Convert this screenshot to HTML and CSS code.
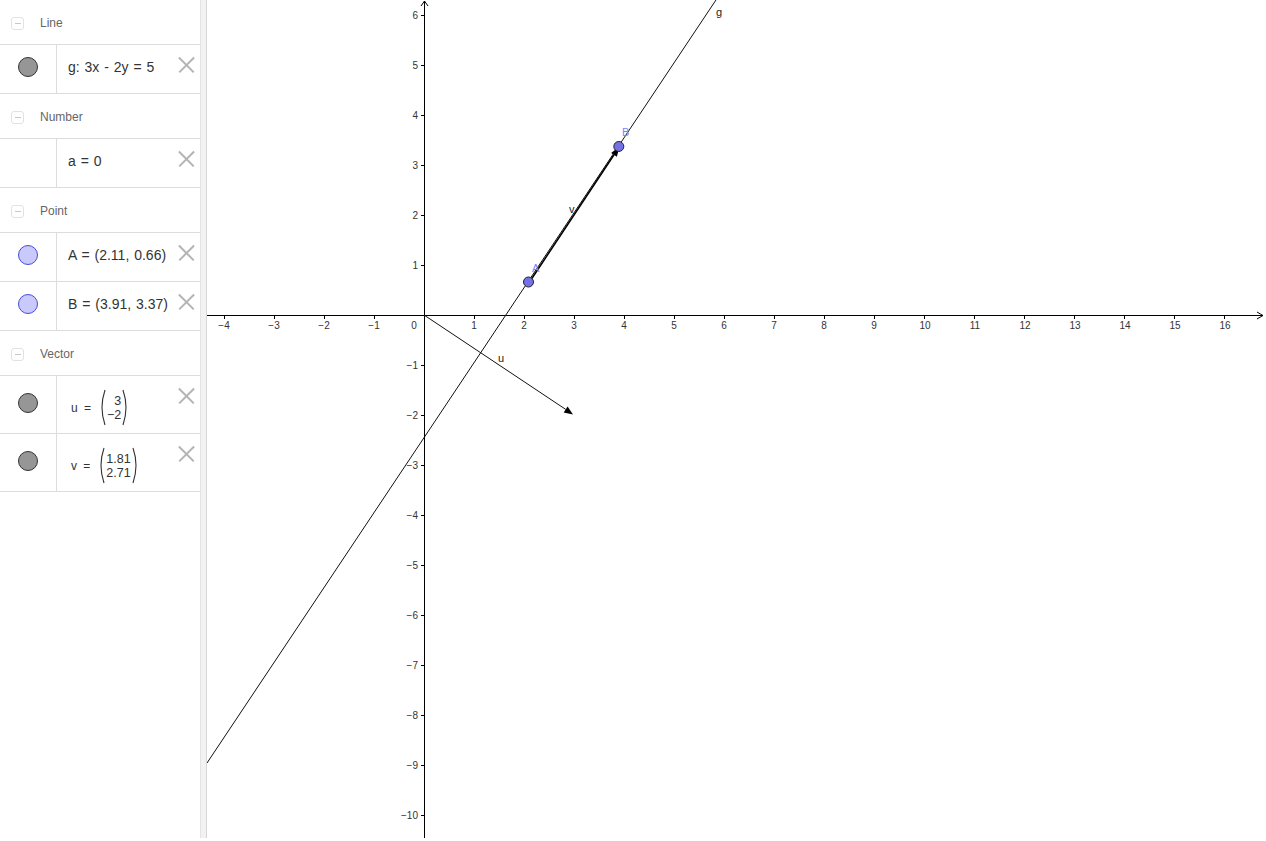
FILE: index.html
```html
<!DOCTYPE html>
<html>
<head>
<meta charset="utf-8">
<link rel="stylesheet" href="styles.css">
</head>
<body>
<div class="app">
  <div class="algebra">
    <div class="head"><span class="collapse"></span><span class="cat">Line</span></div>
    <div class="item">
      <div class="mark"><span class="dot gray"></span></div>
      <div class="expr">g: 3x - 2y = 5</div>
      <span class="close"></span>
    </div>
    <div class="head"><span class="collapse"></span><span class="cat">Number</span></div>
    <div class="item">
      <div class="mark"></div>
      <div class="expr">a = 0</div>
      <span class="close"></span>
    </div>
    <div class="head"><span class="collapse"></span><span class="cat">Point</span></div>
    <div class="item">
      <div class="mark"><span class="dot blue"></span></div>
      <div class="expr">A = (2.11, 0.66)</div>
      <span class="close"></span>
    </div>
    <div class="item">
      <div class="mark"><span class="dot blue"></span></div>
      <div class="expr">B = (3.91, 3.37)</div>
      <span class="close"></span>
    </div>
    <div class="head"><span class="collapse"></span><span class="cat">Vector</span></div>
    <div class="item tall">
      <div class="mark"><span class="dot gray"></span></div>
      <div class="expr vec">
        <span class="vname">u =</span>
        <span class="matrix">
          <svg class="paren" viewBox="0 0 7 37" width="7" height="37"><path d="M6 1 Q0 18.5 6 36" fill="none" stroke="#333" stroke-width="1.1"/></svg>
          <span class="nums"><span>3</span><span>−2</span></span>
          <svg class="paren" viewBox="0 0 7 37" width="7" height="37"><path d="M1 1 Q7 18.5 1 36" fill="none" stroke="#333" stroke-width="1.1"/></svg>
        </span>
      </div>
      <span class="close"></span>
    </div>
    <div class="item tall">
      <div class="mark"><span class="dot gray"></span></div>
      <div class="expr vec">
        <span class="vname">v =</span>
        <span class="matrix">
          <svg class="paren" viewBox="0 0 7 37" width="7" height="37"><path d="M6 1 Q0 18.5 6 36" fill="none" stroke="#333" stroke-width="1.1"/></svg>
          <span class="nums"><span>1.81</span><span>2.71</span></span>
          <svg class="paren" viewBox="0 0 7 37" width="7" height="37"><path d="M1 1 Q7 18.5 1 36" fill="none" stroke="#333" stroke-width="1.1"/></svg>
        </span>
      </div>
      <span class="close"></span>
    </div>
  </div>
  <div class="splitter"></div>
  <div class="graphics">
    <svg class="plot" width="1059" height="838" viewBox="207 0 1059 838">
      <g stroke="#000" stroke-width="1" fill="none" shape-rendering="crispEdges">
        <line x1="207" y1="315.5" x2="1263" y2="315.5"/>
        <line x1="424.5" y1="1" x2="424.5" y2="838"/>
      </g>
      <g stroke="#000" stroke-width="1" fill="none">
        <polyline points="1257,312 1263,315.5 1257,319"/>
        <polyline points="421,6 424.5,1 428,6"/>
      </g>
      <g stroke="#000" stroke-width="1" shape-rendering="crispEdges">
        <line x1="224.5" y1="315" x2="224.5" y2="319"/><line x1="274.5" y1="315" x2="274.5" y2="319"/>
        <line x1="324.5" y1="315" x2="324.5" y2="319"/><line x1="374.5" y1="315" x2="374.5" y2="319"/>
        <line x1="474.5" y1="315" x2="474.5" y2="319"/><line x1="524.5" y1="315" x2="524.5" y2="319"/>
        <line x1="574.5" y1="315" x2="574.5" y2="319"/><line x1="624.5" y1="315" x2="624.5" y2="319"/>
        <line x1="674.5" y1="315" x2="674.5" y2="319"/><line x1="724.5" y1="315" x2="724.5" y2="319"/>
        <line x1="774.5" y1="315" x2="774.5" y2="319"/><line x1="824.5" y1="315" x2="824.5" y2="319"/>
        <line x1="874.5" y1="315" x2="874.5" y2="319"/><line x1="924.5" y1="315" x2="924.5" y2="319"/>
        <line x1="974.5" y1="315" x2="974.5" y2="319"/><line x1="1024.5" y1="315" x2="1024.5" y2="319"/>
        <line x1="1074.5" y1="315" x2="1074.5" y2="319"/><line x1="1124.5" y1="315" x2="1124.5" y2="319"/>
        <line x1="1174.5" y1="315" x2="1174.5" y2="319"/><line x1="1224.5" y1="315" x2="1224.5" y2="319"/>
        <line x1="421" y1="15.5" x2="425" y2="15.5"/><line x1="421" y1="65.5" x2="425" y2="65.5"/>
        <line x1="421" y1="115.5" x2="425" y2="115.5"/><line x1="421" y1="165.5" x2="425" y2="165.5"/>
        <line x1="421" y1="215.5" x2="425" y2="215.5"/><line x1="421" y1="265.5" x2="425" y2="265.5"/>
        <line x1="421" y1="365.5" x2="425" y2="365.5"/><line x1="421" y1="415.5" x2="425" y2="415.5"/>
        <line x1="421" y1="465.5" x2="425" y2="465.5"/><line x1="421" y1="515.5" x2="425" y2="515.5"/>
        <line x1="421" y1="565.5" x2="425" y2="565.5"/><line x1="421" y1="615.5" x2="425" y2="615.5"/>
        <line x1="421" y1="665.5" x2="425" y2="665.5"/><line x1="421" y1="715.5" x2="425" y2="715.5"/>
        <line x1="421" y1="765.5" x2="425" y2="765.5"/><line x1="421" y1="815.5" x2="425" y2="815.5"/>
      </g>
      <g class="xlab" text-anchor="middle">
        <text x="224" y="329">−4</text><text x="274" y="329">−3</text><text x="324" y="329">−2</text><text x="374" y="329">−1</text>
        <text x="414" y="329">0</text>
        <text x="474" y="329">1</text><text x="524" y="329">2</text><text x="574" y="329">3</text><text x="624" y="329">4</text>
        <text x="674" y="329">5</text><text x="724" y="329">6</text><text x="774" y="329">7</text><text x="824" y="329">8</text>
        <text x="874" y="329">9</text><text x="925" y="329">10</text><text x="975" y="329">11</text><text x="1025" y="329">12</text>
        <text x="1075" y="329">13</text><text x="1125" y="329">14</text><text x="1175" y="329">15</text><text x="1225" y="329">16</text>
      </g>
      <g class="ylab" text-anchor="end">
        <text x="418" y="19">6</text><text x="418" y="69">5</text><text x="418" y="119">4</text>
        <text x="418" y="169">3</text><text x="418" y="219">2</text><text x="418" y="269">1</text>
        <text x="418" y="369">−1</text><text x="418" y="419">−2</text><text x="418" y="469">−3</text>
        <text x="418" y="519">−4</text><text x="418" y="569">−5</text><text x="418" y="619">−6</text>
        <text x="418" y="669">−7</text><text x="418" y="719">−8</text><text x="418" y="769">−9</text>
        <text x="418" y="819">−10</text>
      </g>
      <line x1="207" y1="763" x2="717.3" y2="-2" stroke="#111" stroke-width="1"/>
      <line x1="424" y1="315" x2="565.7" y2="409.4" stroke="#111" stroke-width="1"/>
      <polygon points="573,414.5 563.7,412.4 567.6,406.5" fill="#000"/>
      <line x1="529.5" y1="282" x2="614" y2="154.8" stroke="#000" stroke-width="1.6"/>
      <polygon points="619.5,146.5 616.9,156.7 611.1,152.9" fill="#000"/>
      <circle cx="528.5" cy="282" r="5" fill="#7272e6" stroke="#222" stroke-width="1"/>
      <circle cx="618.8" cy="146.5" r="5" fill="#7272e6" stroke="#222" stroke-width="1"/>
      <g class="plabel">
        <text x="532" y="272">A</text>
        <text x="622" y="136">B</text>
      </g>
      <g class="olabel">
        <text x="716" y="16">g</text>
        <text x="569" y="213">v</text>
        <text x="498" y="362">u</text>
      </g>
    </svg>
  </div>
</div>
</body>
</html>
```

FILE: styles.css
```css
html, body {
  margin: 0;
  padding: 0;
  background: #fff;
}

body {
  font-family: "Liberation Sans", Arial, sans-serif;
  color: #333;
}

.app {
  display: flex;
  width: 1266px;
  height: 838px;
  overflow: hidden;
}

.algebra {
  width: 200px;
  flex: 0 0 200px;
  display: flex;
  flex-direction: column;
  background: #fff;
}

.head {
  height: 45px;
  box-sizing: border-box;
  border-bottom: 1px solid #dcdcdc;
  display: flex;
  align-items: center;
  padding-left: 11px;
  padding-top: 2px;
}

.collapse {
  width: 13px;
  height: 13px;
  border: 1px solid #e2e2e2;
  border-radius: 3px;
  box-sizing: border-box;
  display: flex;
  align-items: center;
  justify-content: center;
  margin-right: 16px;
}

.collapse::before {
  content: "";
  width: 6px;
  height: 1px;
  background: #c8c8c8;
}

.cat {
  font-size: 12px;
  color: #666;
}

.item {
  height: 49px;
  box-sizing: border-box;
  border-bottom: 1px solid #dcdcdc;
  display: flex;
  position: relative;
}

.item.tall {
  height: 58px;
}

.mark {
  width: 57px;
  flex: 0 0 57px;
  border-right: 1px solid #dcdcdc;
  display: flex;
  align-items: center;
  justify-content: center;
  box-sizing: border-box;
  padding-bottom: 4px;
}

.dot {
  width: 20px;
  height: 20px;
  border-radius: 50%;
  box-sizing: border-box;
}

.dot.gray {
  background: #969696;
  border: 1px solid #333;
}

.dot.blue {
  background: #c9c9fb;
  border: 1px solid #4b4bd6;
}

.expr {
  display: flex;
  align-items: center;
  padding-left: 11px;
  padding-bottom: 4px;
  font-size: 14px;
  color: #333;
  white-space: nowrap;
  word-spacing: 1px;
}

.expr.vec {
  padding-left: 14px;
  padding-top: 6px;
  padding-bottom: 0;
}

.vname {
  font-size: 12px;
  margin-right: 8px;
  word-spacing: 3px;
}

.matrix {
  display: inline-flex;
  align-items: center;
}

.paren {
  display: block;
}

.nums {
  display: flex;
  flex-direction: column;
  align-items: flex-end;
  font-size: 12.5px;
  line-height: 14px;
  padding: 0 1px;
}

.close {
  position: absolute;
  top: 12px;
  left: 178px;
  width: 16px;
  height: 16px;
}

.close::before,
.close::after {
  content: "";
  position: absolute;
  left: -2px;
  top: 7px;
  width: 21px;
  height: 1.5px;
  background: #b4b4b4;
  transform: rotate(45deg);
}

.close::after {
  transform: rotate(-45deg);
}

.splitter {
  width: 7px;
  flex: 0 0 7px;
  box-sizing: border-box;
  background: #f2f2f2;
  border-left: 1px solid #e4e4e4;
  border-right: 1px solid #d6d6d6;
}

.graphics {
  flex: 1;
  position: relative;
  background: #fff;
}

.plot {
  display: block;
}

.xlab text,
.ylab text {
  font-family: "Liberation Sans", Arial, sans-serif;
  font-size: 10px;
  fill: #333;
}

.plabel text {
  font-family: "Liberation Sans", Arial, sans-serif;
  font-size: 11px;
  fill: #8080ff;
}

.olabel text {
  font-family: "Liberation Sans", Arial, sans-serif;
  font-size: 11px;
  fill: #222;
}
```
